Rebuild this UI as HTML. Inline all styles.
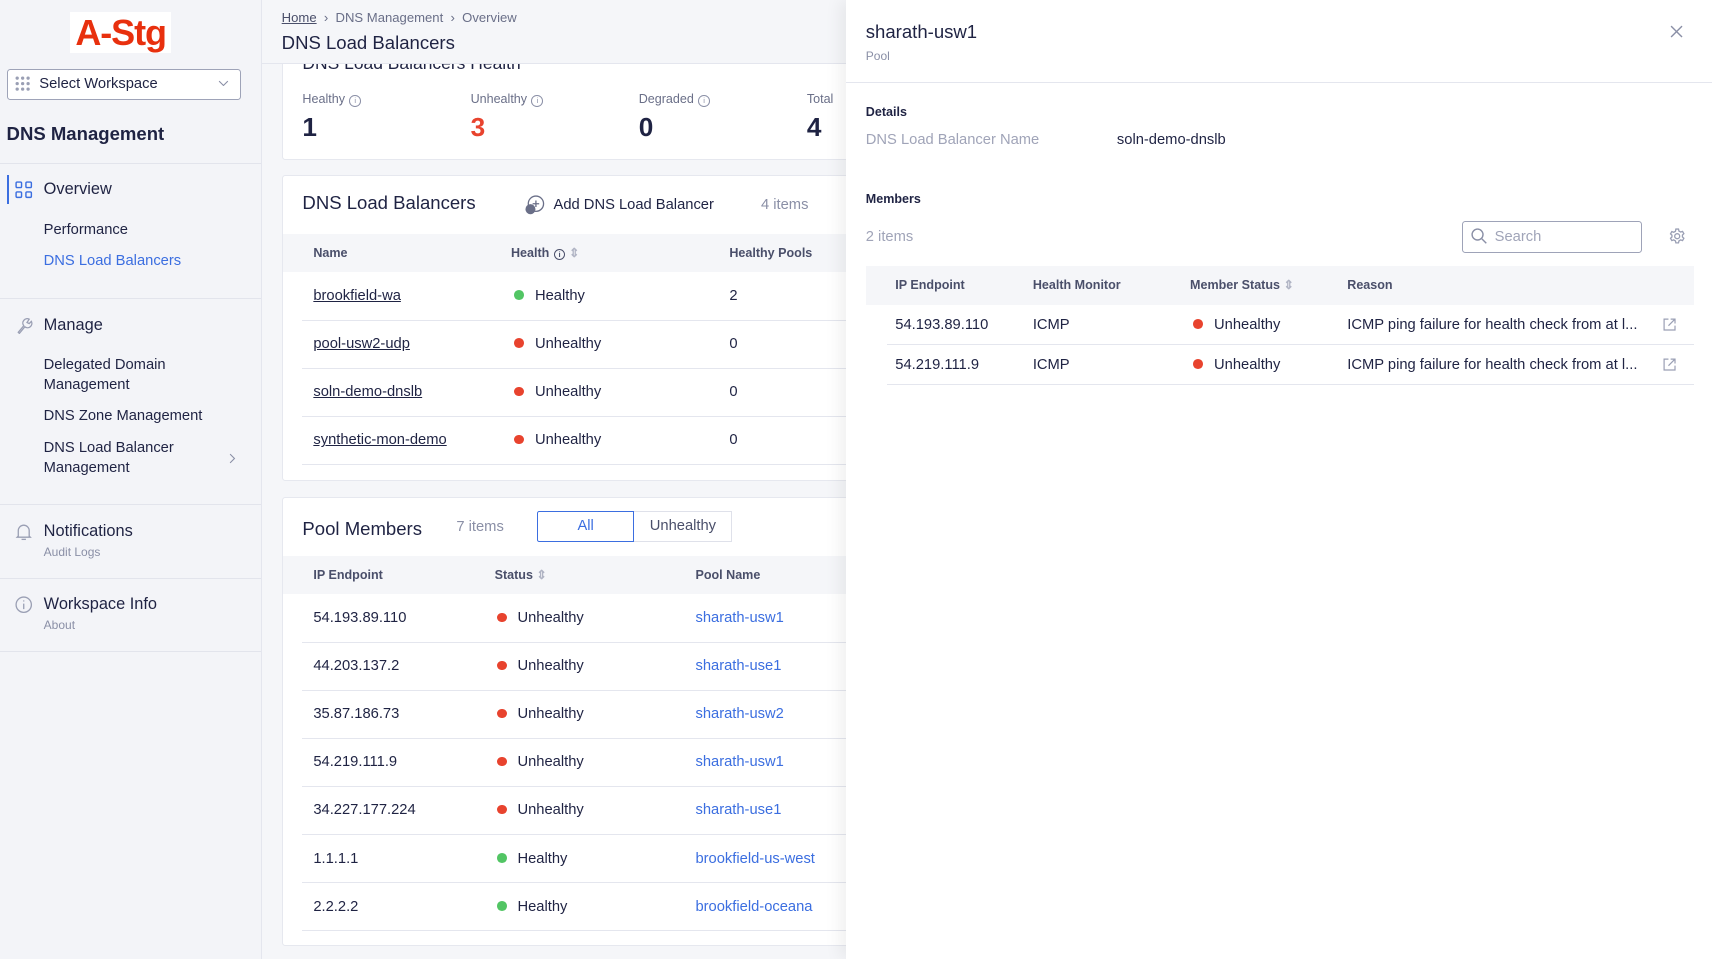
<!DOCTYPE html>
<html><head><meta charset="utf-8"><style>
html{zoom:1.0918}
body{margin:0;width:1568px;height:878px;position:relative;overflow:hidden;background:#f5f6f9;font-family:"Liberation Sans",sans-serif;color:#1f2343;font-size:13.5px}
.a{position:absolute;white-space:nowrap;line-height:1.2}
.side{position:absolute;left:0;top:0;width:239px;height:878px;background:#f3f4f8;border-right:1px solid #e4e6ee}
.hr{position:absolute;left:0;width:239px;height:1px;background:#e2e4ec}
.card{position:absolute;background:#fff;border:1px solid #e6e8ef;border-radius:3px}
.th{position:absolute;background:#f5f6f9}
.h{font-weight:bold;font-size:11.5px;color:#4a4f6a}
.row{position:absolute;height:1px;background:#e4e6ee}
.dot{display:inline-block;width:9px;height:9px;border-radius:50%;margin-right:10px;vertical-align:0}
.r{background:#e8432e}.g{background:#52c564}
.lnk{color:#3b6ee0}
u{text-decoration:underline;color:#1f2343}
.gray{color:#8a8fa6}
.i{display:inline-block;width:9px;height:9px;border:1px solid #8a8fa6;border-radius:50%;font-size:7px;line-height:9px;text-align:center;vertical-align:0;margin-left:4px;color:#8a8fa6}
.panel{position:absolute;left:775px;top:0;width:793px;height:878px;background:#fff;box-shadow:-6px 0 14px rgba(0,0,0,.06);z-index:10}
</style></head><body>
<div class="side">
 <div class="a" style="left:64px;top:11px;width:93px;height:38px;background:#fff;color:#e8300e;font-weight:bold;font-size:33px;line-height:38px;text-align:center;letter-spacing:-1px">A-Stg</div>
 <div class="a" style="left:6px;top:63px;width:213px;height:27px;border:1px solid #9ea3b8;border-radius:3px;background:#fff"></div>
 <svg class="a" style="left:14px;top:70px" width="14" height="14"><g fill="#9a9fb4"><circle cx="2" cy="2" r="1.5"/><circle cx="7" cy="2" r="1.5"/><circle cx="12" cy="2" r="1.5"/><circle cx="2" cy="7" r="1.5"/><circle cx="7" cy="7" r="1.5"/><circle cx="12" cy="7" r="1.5"/><circle cx="2" cy="12" r="1.5"/><circle cx="7" cy="12" r="1.5"/><circle cx="12" cy="12" r="1.5"/></g></svg>
 <div class="a" style="left:36px;top:70px;font-size:13.5px">Select Workspace</div>
 <svg class="a" style="left:200px;top:73px" width="10" height="6"><path d="M1 1l4 4 4-4" stroke="#8a8fa6" fill="none"/></svg>
 <div class="a" style="left:6px;top:113px;font-size:17px;font-weight:bold">DNS Management</div>
 <div class="hr" style="top:149px"></div>
 <div class="a" style="left:6px;top:160px;width:2px;height:27px;background:#3b6ee0"></div>
 <svg class="a" style="left:14px;top:166px" width="16" height="16" fill="none" stroke="#3b6ee0" stroke-width="1.3"><rect x="1" y="1" width="5" height="5" rx="1"/><rect x="10" y="1" width="5" height="5" rx="1"/><rect x="1" y="10" width="5" height="5" rx="1"/><rect x="10" y="10" width="5" height="5" rx="1"/></svg>
 <div class="a" style="left:40px;top:165px;font-size:15px">Overview</div>
 <div class="a" style="left:40px;top:203px">Performance</div>
 <div class="a lnk" style="left:40px;top:232px">DNS Load Balancers</div>
 <div class="hr" style="top:273px"></div>
 <svg class="a" style="left:14px;top:290px" width="16" height="16" fill="none" stroke="#9a9fb4" stroke-width="1.2"><path d="M3 14l5-6a4 4 0 0 1 5-6l-2 3 2 1 2-2a4 4 0 0 1-6 5l-5 6z"/></svg>
 <div class="a" style="left:40px;top:289px;font-size:15px">Manage</div>
 <div class="a" style="left:40px;top:326px;line-height:18px">Delegated Domain<br>Management</div>
 <div class="a" style="left:40px;top:374px">DNS Zone Management</div>
 <div class="a" style="left:40px;top:402px;line-height:18px">DNS Load Balancer<br>Management</div>
 <svg class="a" style="left:210px;top:415px" width="6" height="10"><path d="M1 1l4 4-4 4" stroke="#8a8fa6" fill="none"/></svg>
 <div class="hr" style="top:462px"></div>
 <svg class="a" style="left:14px;top:479px" width="16" height="17" fill="none" stroke="#9a9fb4" stroke-width="1.2"><path d="M3 12V7a5 5 0 0 1 10 0v5l1 1H2z"/><path d="M6 15h4"/></svg>
 <div class="a" style="left:40px;top:478px;font-size:15px">Notifications</div>
 <div class="a gray" style="left:40px;top:499px;font-size:11px">Audit Logs</div>
 <div class="hr" style="top:529px"></div>
 <svg class="a" style="left:14px;top:546px" width="16" height="16" fill="none" stroke="#9a9fb4" stroke-width="1.2"><circle cx="8" cy="8" r="7"/><path d="M8 7v5M8 4v1"/></svg>
 <div class="a" style="left:40px;top:545px;font-size:15px">Workspace Info</div>
 <div class="a gray" style="left:40px;top:566px;font-size:11px">About</div>
 <div class="hr" style="top:596px"></div>
</div>

<div class="a" style="left:240px;top:0;width:540px;height:58px;background:#f5f6f9;border-bottom:1px solid #e4e6ee;z-index:2"></div>
<div class="a" style="left:258px;top:9px;font-size:12px;color:#6a6f88;z-index:3"><u style="color:#4a4f6a">Home</u> &nbsp;›&nbsp; DNS Management &nbsp;›&nbsp; Overview</div>
<div class="a" style="left:258px;top:29px;font-size:17px;z-index:3">DNS Load Balancers</div>

<div class="card" style="left:258px;top:40px;width:530px;height:105px"></div>
<div class="a" style="left:277px;top:49px;font-size:16px">DNS Load Balancers Health</div>
<div class="a" style="left:277px;top:84px;font-size:11.5px;color:#6a6f88">Healthy<span class="i">i</span></div>
<div class="a" style="left:431px;top:84px;font-size:11.5px;color:#6a6f88">Unhealthy<span class="i">i</span></div>
<div class="a" style="left:585px;top:84px;font-size:11.5px;color:#6a6f88">Degraded<span class="i">i</span></div>
<div class="a" style="left:739px;top:84px;font-size:11.5px;color:#6a6f88">Total</div>
<div class="a" style="left:277px;top:103px;font-size:24px;font-weight:bold">1</div>
<div class="a" style="left:431px;top:103px;font-size:24px;font-weight:bold;color:#e8432e">3</div>
<div class="a" style="left:585px;top:103px;font-size:24px;font-weight:bold">0</div>
<div class="a" style="left:739px;top:103px;font-size:24px;font-weight:bold">4</div>

<div class="card" style="left:258px;top:160px;width:530px;height:279px"></div>
<div class="a" style="left:277px;top:176px;font-size:17px">DNS Load Balancers</div>
<svg class="a" style="left:481px;top:179px" width="18" height="18" fill="none" stroke="#6a6f88" stroke-width="1.2"><circle cx="10" cy="8" r="7"/><path d="M10 5v6M7 8h6"/><circle cx="5" cy="13" r="4" fill="#6a6f88"/></svg>
<div class="a" style="left:507px;top:180px;font-size:13.5px">Add DNS Load Balancer</div>
<div class="a gray" style="left:697px;top:180px;font-size:13.5px">4 items</div>
<div class="th" style="left:259px;top:214px;width:530px;height:35px"></div>
<div class="a h" style="left:287px;top:225px">Name</div>
<div class="a h" style="left:468px;top:225px">Health<span class="i" style="border-color:#4a4f6a;color:#4a4f6a">i</span> <span style="color:#b0b4c4">⇕</span></div>
<div class="a h" style="left:668px;top:225px">Healthy Pools</div>
<div class="a" style="left:287px;top:264px"><u>brookfield-wa</u></div><div class="a" style="left:471px;top:264px"><span class="dot g"></span>Healthy</div><div class="a" style="left:668px;top:264px">2</div>
<div class="row" style="left:277px;top:293px;width:500px"></div>
<div class="a" style="left:287px;top:308px"><u>pool-usw2-udp</u></div><div class="a" style="left:471px;top:308px"><span class="dot r"></span>Unhealthy</div><div class="a" style="left:668px;top:308px">0</div>
<div class="row" style="left:277px;top:337px;width:500px"></div>
<div class="a" style="left:287px;top:352px"><u>soln-demo-dnslb</u></div><div class="a" style="left:471px;top:352px"><span class="dot r"></span>Unhealthy</div><div class="a" style="left:668px;top:352px">0</div>
<div class="row" style="left:277px;top:381px;width:500px"></div>
<div class="a" style="left:287px;top:396px"><u>synthetic-mon-demo</u></div><div class="a" style="left:471px;top:396px"><span class="dot r"></span>Unhealthy</div><div class="a" style="left:668px;top:396px">0</div>
<div class="row" style="left:277px;top:425px;width:500px"></div>

<div class="card" style="left:258px;top:455px;width:530px;height:410px"></div>
<div class="a" style="left:277px;top:474px;font-size:17px">Pool Members</div>
<div class="a gray" style="left:418px;top:475px;font-size:13.5px">7 items</div>
<div class="a" style="left:492px;top:468px;width:87px;height:27px;border:1px solid #3b6ee0;color:#3b6ee0;text-align:center;line-height:27px;font-size:13.5px;border-radius:2px 0 0 2px">All</div>
<div class="a" style="left:581px;top:468px;width:89px;height:27px;border:1px solid #dfe1ea;border-left:none;color:#4a4f6a;text-align:center;line-height:27px;font-size:13.5px">Unhealthy</div>
<div class="th" style="left:259px;top:509px;width:530px;height:35px"></div>
<div class="a h" style="left:287px;top:520px">IP Endpoint</div>
<div class="a h" style="left:453px;top:520px">Status <span style="color:#b0b4c4">⇕</span></div>
<div class="a h" style="left:637px;top:520px">Pool Name</div>
<div class="a" style="left:287px;top:559px">54.193.89.110</div><div class="a" style="left:455px;top:559px"><span class="dot r"></span>Unhealthy</div><div class="a lnk" style="left:637px;top:559px">sharath-usw1</div>
<div class="row" style="left:277px;top:588px;width:500px"></div>
<div class="a" style="left:287px;top:603px">44.203.137.2</div><div class="a" style="left:455px;top:603px"><span class="dot r"></span>Unhealthy</div><div class="a lnk" style="left:637px;top:603px">sharath-use1</div>
<div class="row" style="left:277px;top:632px;width:500px"></div>
<div class="a" style="left:287px;top:647px">35.87.186.73</div><div class="a" style="left:455px;top:647px"><span class="dot r"></span>Unhealthy</div><div class="a lnk" style="left:637px;top:647px">sharath-usw2</div>
<div class="row" style="left:277px;top:676px;width:500px"></div>
<div class="a" style="left:287px;top:691px">54.219.111.9</div><div class="a" style="left:455px;top:691px"><span class="dot r"></span>Unhealthy</div><div class="a lnk" style="left:637px;top:691px">sharath-usw1</div>
<div class="row" style="left:277px;top:720px;width:500px"></div>
<div class="a" style="left:287px;top:735px">34.227.177.224</div><div class="a" style="left:455px;top:735px"><span class="dot r"></span>Unhealthy</div><div class="a lnk" style="left:637px;top:735px">sharath-use1</div>
<div class="row" style="left:277px;top:764px;width:500px"></div>
<div class="a" style="left:287px;top:779px">1.1.1.1</div><div class="a" style="left:455px;top:779px"><span class="dot g"></span>Healthy</div><div class="a lnk" style="left:637px;top:779px">brookfield-us-west</div>
<div class="row" style="left:277px;top:808px;width:500px"></div>
<div class="a" style="left:287px;top:823px">2.2.2.2</div><div class="a" style="left:455px;top:823px"><span class="dot g"></span>Healthy</div><div class="a lnk" style="left:637px;top:823px">brookfield-oceana</div>
<div class="row" style="left:277px;top:852px;width:500px"></div>

<div class="panel">
 <div class="a" style="left:18px;top:19px;font-size:17px">sharath-usw1</div>
 <div class="a gray" style="left:18px;top:45px;font-size:11px">Pool</div>
 <svg class="a" style="left:755px;top:23px" width="12" height="12"><path d="M1 1l10 10M11 1L1 11" stroke="#8a8fa6" stroke-width="1.3"/></svg>
 <div class="a" style="left:0;top:75px;width:793px;height:1px;background:#e4e6ee"></div>
 <div class="a" style="left:18px;top:96px;font-size:11.5px;font-weight:bold">Details</div>
 <div class="a" style="left:18px;top:121px;color:#a0a4b8">DNS Load Balancer Name</div>
 <div class="a" style="left:248px;top:121px">soln-demo-dnslb</div>
 <div class="a" style="left:18px;top:176px;font-size:11.5px;font-weight:bold">Members</div>
 <div class="a" style="left:18px;top:210px;color:#a0a4b8">2 items</div>
 <div class="a" style="left:564px;top:202px;width:163px;height:28px;border:1px solid #9ea3b8;border-radius:3px"></div>
 <svg class="a" style="left:572px;top:209px" width="15" height="15" fill="none" stroke="#8a8fa6" stroke-width="1.3"><circle cx="6" cy="6" r="5"/><path d="M10 10l4 4"/></svg>
 <div class="a" style="left:594px;top:210px;color:#a0a4b8">Search</div>
 <svg class="a" style="left:754px;top:209px" width="15" height="15" fill="none" stroke="#9a9fb4" stroke-width="1.2"><circle cx="7.5" cy="7.5" r="2.3"/><path d="M6.3 1h2.4l.4 1.8 1.6.9 1.7-.6 1.2 2.1-1.3 1.2v1.8l1.3 1.2-1.2 2.1-1.7-.6-1.6.9-.4 1.8H6.3l-.4-1.8-1.6-.9-1.7.6-1.2-2.1 1.3-1.2V6.6L1.4 5.4l1.2-2.1 1.7.6 1.6-.9z"/></svg>
 <div class="th" style="left:18px;top:244px;width:759px;height:35px"></div>
 <div class="a h" style="left:45px;top:255px">IP Endpoint</div>
 <div class="a h" style="left:171px;top:255px">Health Monitor</div>
 <div class="a h" style="left:315px;top:255px">Member Status <span style="color:#b0b4c4">⇕</span></div>
 <div class="a h" style="left:459px;top:255px">Reason</div>
 <div class="a" style="left:45px;top:290px">54.193.89.110</div><div class="a" style="left:171px;top:290px">ICMP</div><div class="a" style="left:318px;top:290px"><span class="dot r"></span>Unhealthy</div><div class="a" style="left:459px;top:290px">ICMP ping failure for health check from at l...</div>
 <svg class="a" style="left:748px;top:291px" width="12" height="12" fill="none" stroke="#9a9fb4" stroke-width="1.1"><path d="M5 1H1v10h10V7M7 1h4v4M11 1L5 7"/></svg>
 <div class="row" style="left:37px;top:315px;width:740px"></div>
 <div class="a" style="left:45px;top:327px">54.219.111.9</div><div class="a" style="left:171px;top:327px">ICMP</div><div class="a" style="left:318px;top:327px"><span class="dot r"></span>Unhealthy</div><div class="a" style="left:459px;top:327px">ICMP ping failure for health check from at l...</div>
 <svg class="a" style="left:748px;top:328px" width="12" height="12" fill="none" stroke="#9a9fb4" stroke-width="1.1"><path d="M5 1H1v10h10V7M7 1h4v4M11 1L5 7"/></svg>
 <div class="row" style="left:37px;top:352px;width:740px"></div>
</div>
</body></html>
